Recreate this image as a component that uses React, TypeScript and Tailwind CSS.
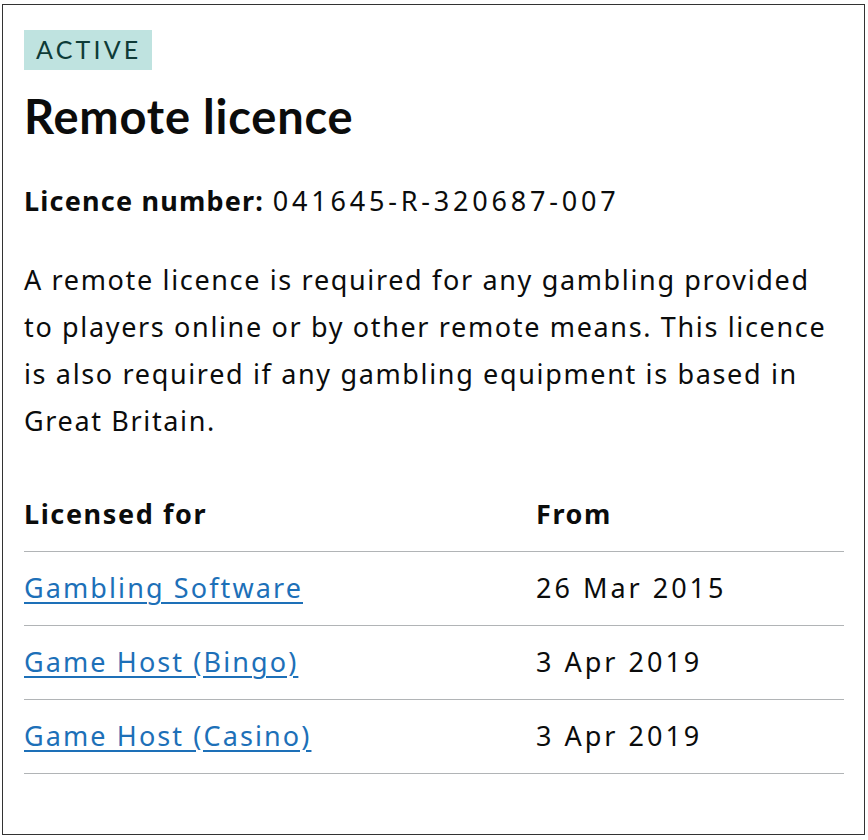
import React from "react";

const rows = [
  { name: "Gambling Software", date: "26 Mar 2015" },
  { name: "Game Host (Bingo)", date: "3 Apr 2019" },
  { name: "Game Host (Casino)", date: "3 Apr 2019" },
];

export default function App() {
  return (
    <div className="w-[868px] h-[840px] bg-white pt-[4px] pl-[2px]">
      <div
        className="w-[863px] h-[831px] border border-[#333333] pl-[21px] pr-[19px] pt-[25px] text-[#0b0c0c]"
        style={{ fontFamily: '"Noto Sans", sans-serif' }}
      >
        <div
          className="inline-flex h-[40px] items-center bg-[#bfe3e0] pl-[12px] pr-[10px] text-[25px] tracking-[3.2px] text-[#0e3b37]"
          style={{ fontFamily: 'Lato, sans-serif' }}
        >
          ACTIVE
        </div>
        <h1
          className="mt-[18px] text-[47px] font-bold leading-[56px] tracking-[0.8px]"
          style={{ fontFamily: 'Lato, sans-serif' }}
        >
          Remote licence
        </h1>
        <div className="tracking-[1.6px]">
          <p className="mt-[33px] text-[27px] leading-[47px]">
            <span className="font-bold tracking-[1.2px]">Licence number:</span>{" "}
            <span className="tracking-[3.8px]">041645-R-320687-007</span>
          </p>
          <p className="mt-[32px] text-[27px] leading-[47px] tracking-[1.65px]">
            A remote licence is required for any gambling provided
            <br />
            to players online or by other remote means. This licence
            <br />
            is also required if any gambling equipment is based in
            <br />
            Great Britain.
          </p>
          <table className="mt-[33px] w-[820px] border-collapse text-[27px]">
            <thead>
              <tr className="border-b border-[#b1b4b6]">
                <th className="w-[512px] h-[74px] text-left font-bold align-middle">Licensed for</th>
                <th className="text-left font-bold align-middle">From</th>
              </tr>
            </thead>
            <tbody>
              {rows.map((r) => (
                <tr key={r.name} className="border-b border-[#b1b4b6]">
                  <td className="h-[74px] align-middle">
                    <a
                      href="#"
                      className="text-[#1d70b8] tracking-[2.1px] underline decoration-[2px] underline-offset-[4px]"
                    >
                      {r.name}
                    </a>
                  </td>
                  <td className="align-middle tracking-[3px]">{r.date}</td>
                </tr>
              ))}
            </tbody>
          </table>
        </div>
      </div>
    </div>
  );
}
